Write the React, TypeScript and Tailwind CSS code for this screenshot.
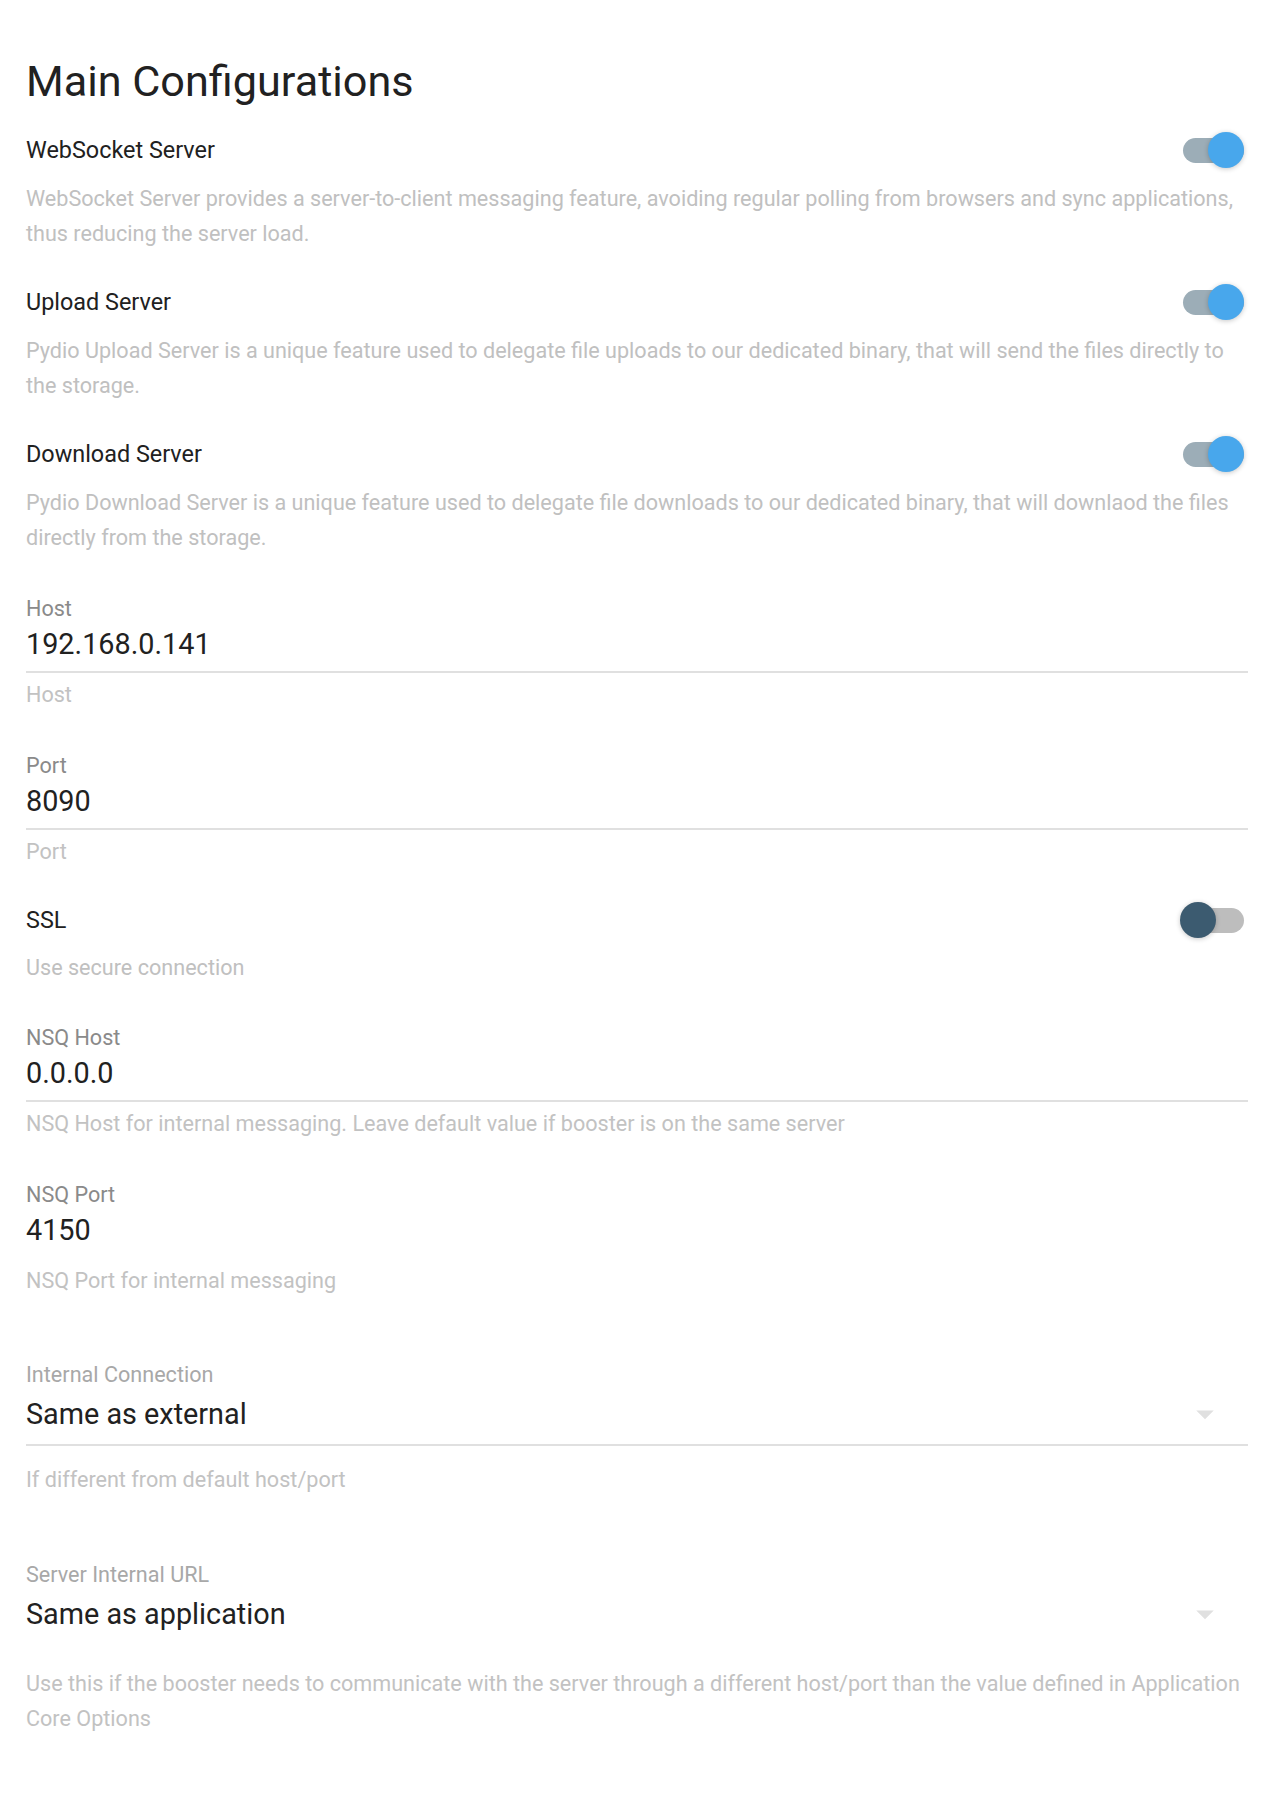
import React from 'react';

interface ToggleProps {
  on: boolean;
}

function Toggle({ on }: ToggleProps) {
  return (
    <div className="relative mr-[4px] h-[36px] w-[64px] shrink-0">
      <div
        className={
          'absolute top-[5.5px] right-0 left-[3px] h-[25px] rounded-full ' +
          (on ? 'bg-[#9cadb7]' : 'bg-[#bdbdbd]')
        }
      />
      <div
        className={
          'absolute top-0 h-[36px] w-[36px] rounded-full shadow-[0_1px_5px_rgba(0,0,0,0.22)] ' +
          (on ? 'left-[28px] bg-[#48a7ec]' : 'left-0 bg-[#3c5b70]')
        }
      />
    </div>
  );
}

interface ToggleSectionProps {
  label: string;
  description: string;
  on: boolean;
  className?: string;
  descClassName?: string;
}

function ToggleSection({ label, description, on, className = '', descClassName = 'mt-[9px]' }: ToggleSectionProps) {
  return (
    <div className={className}>
      <div className="flex h-[44px] items-center justify-between">
        <span className="text-[23.4px] leading-[28px] text-[#212121]">{label}</span>
        <Toggle on={on} />
      </div>
      <p className={descClassName + ' text-[21.6px] leading-[35px] text-[#c0c0c0]'}>{description}</p>
    </div>
  );
}

interface TextFieldProps {
  label: string;
  value: string;
  hint: string;
  showLine?: boolean;
  className?: string;
}

function TextField({ label, value, hint, showLine = true, className = '' }: TextFieldProps) {
  return (
    <div className={className}>
      <div className="text-[21.6px] leading-[24px] text-[#8a8a8a]">{label}</div>
      <div className="mt-[5px] text-[28.8px] leading-[36px] text-[#212121]">{value}</div>
      <div className={'mt-[9px] h-[2px] ' + (showLine ? 'bg-[#e0e0e0]' : 'bg-transparent')} />
      <div className="mt-[10px] text-[21.6px] leading-[24px] text-[#c2c2c2]">{hint}</div>
    </div>
  );
}

function ArrowDown() {
  return (
    <svg viewBox="0 0 24 24" className="mr-[22px] h-[42px] w-[42px] shrink-0" fill="#e0e0e0">
      <path d="M7 10l5 5 5-5z" />
    </svg>
  );
}

export default function App() {
  return (
    <div className="min-h-screen bg-white px-[26px] pt-[57px] pb-[60px] font-['Roboto',sans-serif] antialiased">
      <h1 className="text-[43.2px] leading-[50px] font-normal text-[#212121]">Main Configurations</h1>

      <ToggleSection
        className="mt-[21px]"
        label="WebSocket Server"
        on
        description="WebSocket Server provides a server-to-client messaging feature, avoiding regular polling from browsers and sync applications, thus reducing the server load."
      />
      <ToggleSection
        className="mt-[29px]"
        label="Upload Server"
        on
        description="Pydio Upload Server is a unique feature used to delegate file uploads to our dedicated binary, that will send the files directly to the storage."
      />
      <ToggleSection
        className="mt-[29px]"
        label="Download Server"
        on
        description="Pydio Download Server is a unique feature used to delegate file downloads to our dedicated binary, that will downlaod the files directly from the storage."
      />

      <TextField className="mt-[42px]" label="Host" value="192.168.0.141" hint="Host" />
      <TextField className="mt-[47px]" label="Port" value="8090" hint="Port" />

      <ToggleSection
        className="mt-[34px]"
        descClassName="mt-[8px]"
        label="SSL"
        on={false}
        description="Use secure connection"
      />

      <TextField
        className="mt-[41px]"
        label="NSQ Host"
        value="0.0.0.0"
        hint="NSQ Host for internal messaging. Leave default value if booster is on the same server"
      />
      <TextField
        className="mt-[47px]"
        label="NSQ Port"
        value="4150"
        hint="NSQ Port for internal messaging"
        showLine={false}
      />

      <div className="mt-[70px]">
        <div className="text-[21.6px] leading-[24px] text-[#a8a8a8]">Internal Connection</div>
        <div className="mt-[9px] flex h-[36px] items-center justify-between">
          <span className="text-[28.8px] leading-[36px] text-[#212121]">Same as external</span>
          <ArrowDown />
        </div>
        <div className="mt-[12px] h-[2px] bg-[#e0e0e0]" />
        <div className="mt-[22px] text-[21.6px] leading-[24px] text-[#c2c2c2]">If different from default host/port</div>
      </div>

      <div className="mt-[71px]">
        <div className="text-[21.6px] leading-[24px] text-[#a8a8a8]">Server Internal URL</div>
        <div className="mt-[9px] flex h-[36px] items-center justify-between">
          <span className="text-[28.8px] leading-[36px] text-[#212121]">Same as application</span>
          <ArrowDown />
        </div>
        <p className="mt-[34px] text-[21.6px] leading-[35px] text-[#c2c2c2]">
          Use this if the booster needs to communicate with the server through a different host/port than the value
          defined in Application Core Options
        </p>
      </div>
    </div>
  );
}
